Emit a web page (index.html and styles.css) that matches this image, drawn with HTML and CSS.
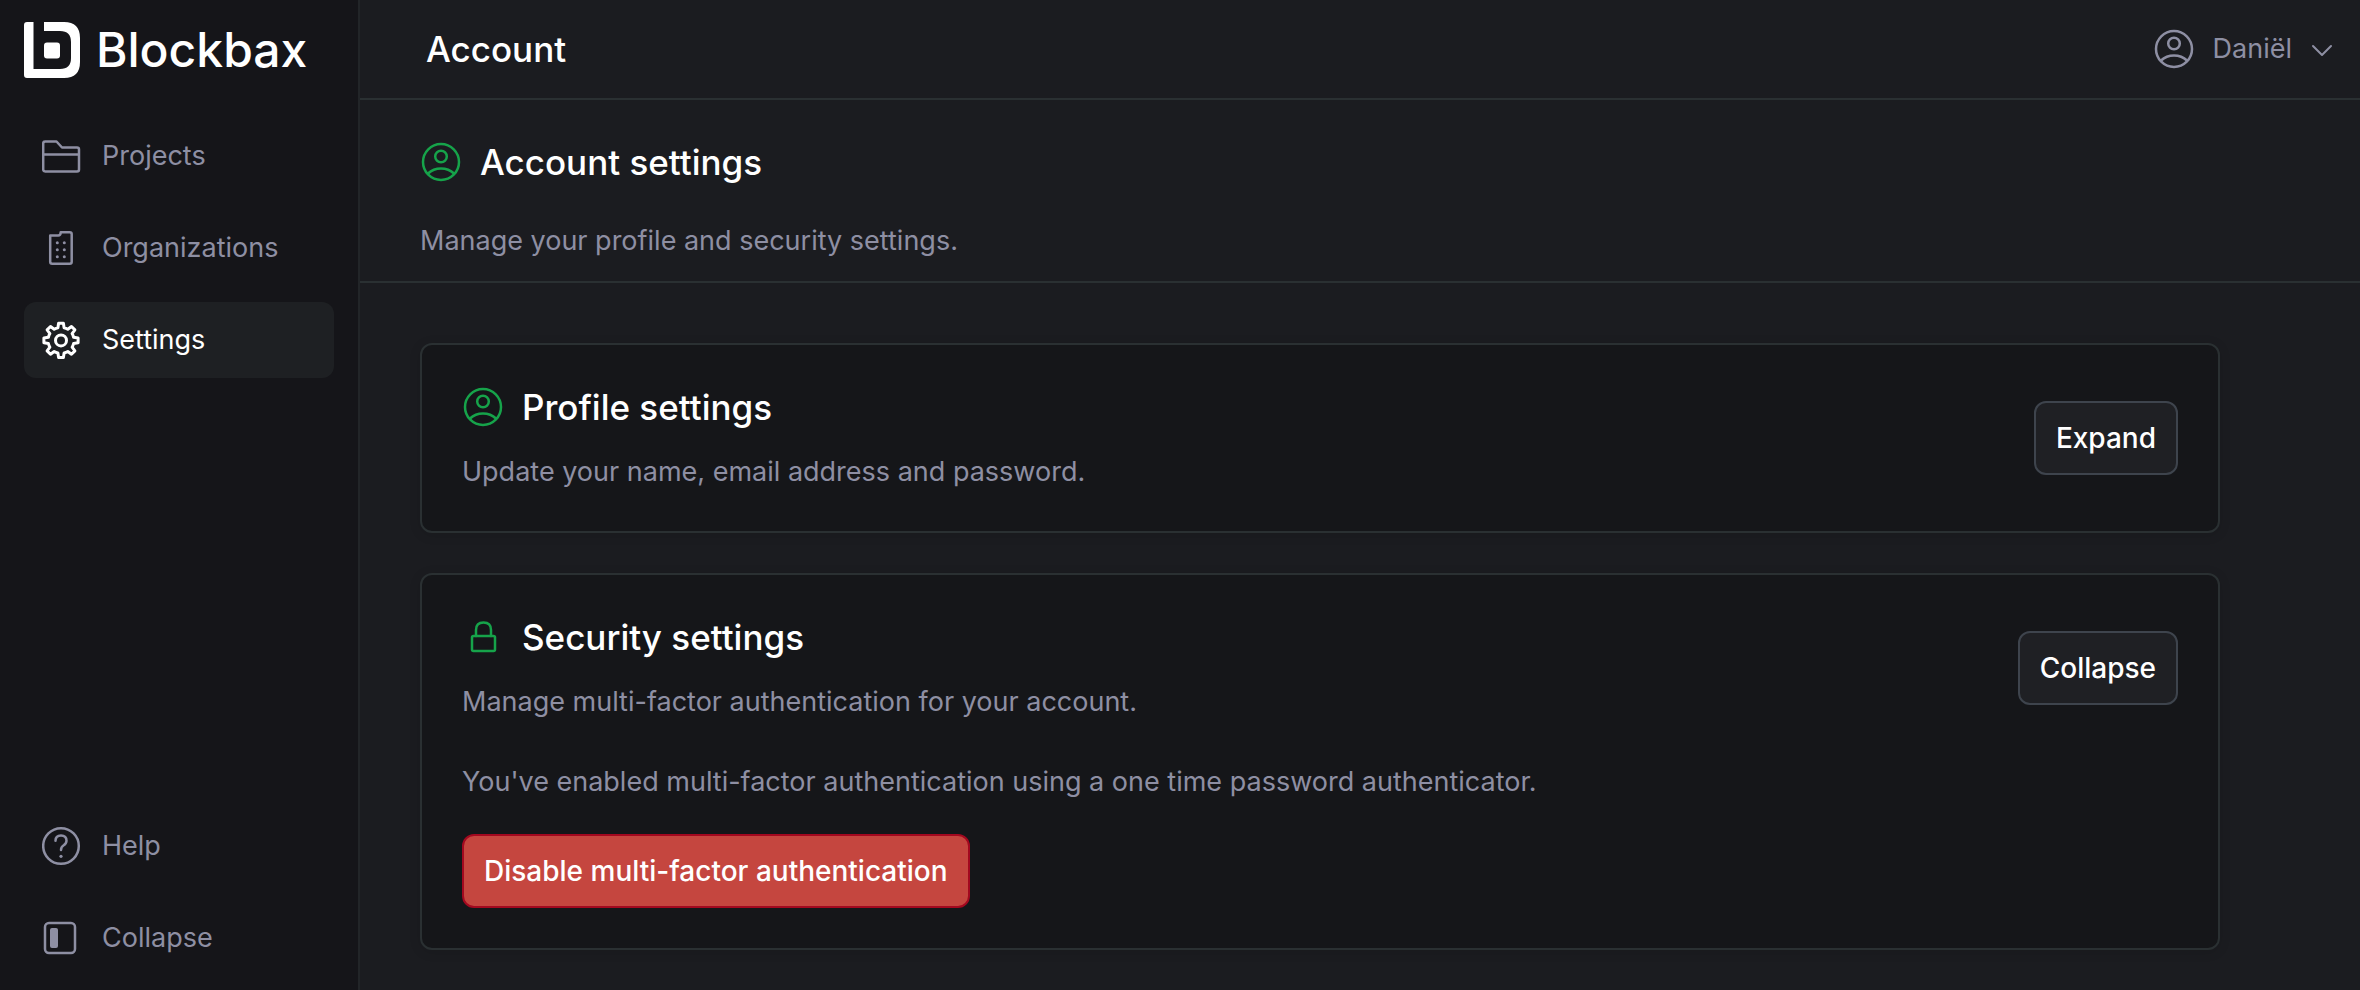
FILE: index.html
```html
<!DOCTYPE html>
<html lang="en">
  <head>
    <meta charset="UTF-8" />
    <meta name="viewport" content="width=device-width, initial-scale=1.0" />
    <title>Account - Blockbax</title>
    <link rel="stylesheet" href="styles.css">
  </head>
  <body>
    <!-- Shared icon shapes -->
    <svg class="icon-defs" aria-hidden="true">
      <symbol id="icon-user" viewBox="0 0 42 42">
        <circle cx="21" cy="21" r="18" />
        <circle cx="21" cy="15.5" r="5.8" />
        <path d="M8 32.5C15 25.7 27 25.7 34 32.5" />
      </symbol>
    </svg>

    <div class="app">
      <aside class="sidebar">
        <a class="logo" href="#">
          <svg class="logo-mark" viewBox="0 0 56 56" aria-hidden="true">
            <path d="M3 0h6.5v47H36q11 0 11-11V20q0-11-11-11H20V0h20q16 0 16 16v24q0 16-16 16H3q-3 0-3-3V3q0-3 3-3z" />
            <rect x="20" y="20.5" width="16" height="16" rx="3" />
          </svg>
          <span class="logo-text">Blockbax</span>
        </a>

        <nav class="nav">
          <a class="nav-item" href="#">
            <svg class="icon" viewBox="0 0 42 42" aria-hidden="true">
              <path d="M1.200 19.500V8.500q0-2 2-2h11.300l5.500 6h15q2 0 2 2v20q0 2-2 2h-31.800q-2 0-2-2v-15h35.600" />
            </svg>
            Projects
          </a>
          <a class="nav-item" href="#">
            <svg class="icon" viewBox="0 0 42 42" aria-hidden="true">
              <path d="M8.200 8.500h8q2.500 0 2.500-3.200h9q2 0 2 2v27.500q0 2-2 2h-17.500q-2 0-2-2z" />
              <g class="dots">
                <circle cx="15.300" cy="15.700" r="1.500" />
                <circle cx="22.300" cy="15.700" r="1.500" />
                <circle cx="15.300" cy="22.700" r="1.500" />
                <circle cx="22.300" cy="22.700" r="1.500" />
                <circle cx="15.300" cy="29.700" r="1.500" />
                <circle cx="22.300" cy="29.700" r="1.500" />
              </g>
            </svg>
            Organizations
          </a>
          <a class="nav-item active" href="#">
            <svg class="icon icon-bold" viewBox="0 -1 42 42" aria-hidden="true">
              <path d="M16.600 3.300h4.800l.7 4.500q2 .5 3.700 1.500l3.700-2.800 3.400 3.400-2.800 3.700q1 1.700 1.500 3.700l4.500.7v4.800l-4.500.7q-.5 2-1.500 3.700l2.800 3.700-3.400 3.400-3.700-2.800q-1.700 1-3.700 1.500l-.7 4.500h-4.800l-.7-4.500q-2-.5-3.700-1.500l-3.700 2.800-3.400-3.400 2.800-3.700q-1-1.700-1.500-3.700l-4.500-.7v-4.800l4.500-.7q.5-2 1.500-3.700l-2.800-3.700 3.400-3.400 3.700 2.800q1.700-1 3.700-1.500z" />
              <circle cx="19" cy="20.400" r="5.500" />
            </svg>
            Settings
          </a>
        </nav>

        <div class="nav nav-bottom">
          <a class="nav-item" href="#">
            <svg class="icon" viewBox="0 0 42 42" aria-hidden="true">
              <circle cx="19" cy="21" r="17.800" />
              <path d="M13.500 15.800q0-5.300 5.500-5.300t5.500 5.300q0 2.700-2.800 4.500-2.700 1.700-2.700 4.700" />
              <circle class="dot" cx="19" cy="31.300" r="1.600" />
            </svg>
            Help
          </a>
          <button class="nav-item" type="button">
            <svg class="icon" viewBox="0 0 42 42" aria-hidden="true">
              <rect x="3" y="6" width="30" height="30" rx="4" />
              <rect class="dot" x="8" y="11" width="8" height="20" rx="2" />
            </svg>
            Collapse
          </button>
        </div>
      </aside>

      <main class="main">
        <header class="topbar">
          <h1 class="title">Account</h1>
          <button class="user-menu" type="button">
            <svg class="icon" aria-hidden="true"><use href="#icon-user" /></svg>
            Daniël
            <svg class="chevron" viewBox="0 0 24 24" aria-hidden="true">
              <path d="M3 9l9 9 9-9" />
            </svg>
          </button>
        </header>

        <section class="page-head">
          <h2 class="title">
            <svg class="icon icon-green" aria-hidden="true"><use href="#icon-user" /></svg>
            Account settings
          </h2>
          <p class="text">Manage your profile and security settings.</p>
        </section>

        <div class="cards">
          <section class="card">
            <div class="card-head">
              <div class="card-intro">
                <h2 class="title">
                  <svg class="icon icon-green" aria-hidden="true"><use href="#icon-user" /></svg>
                  Profile settings
                </h2>
                <p class="text">Update your name, email address and password.</p>
              </div>
              <button class="btn" type="button">Expand</button>
            </div>
          </section>

          <section class="card">
            <div class="card-head">
              <div class="card-intro">
                <h2 class="title">
                  <svg class="icon icon-green" viewBox="0 0 42 42" aria-hidden="true">
                    <rect x="10" y="20" width="23" height="15" rx="1.500" />
                    <path d="M14 20v-6q0-7.500 7.500-7.500t7.500 7.500v6" />
                  </svg>
                  Security settings
                </h2>
                <p class="text">Manage multi-factor authentication for your account.</p>
              </div>
              <button class="btn" type="button">Collapse</button>
            </div>
            <div class="card-body">
              <p class="text">You've enabled multi-factor authentication using a one time password authenticator.</p>
              <button class="btn btn-danger" type="button">Disable multi-factor authentication</button>
            </div>
          </section>
        </div>
      </main>
    </div>
  </body>
</html>
```

FILE: styles.css
```css
* {
  box-sizing: border-box;
}

body {
  margin: 0;
  background: #1b1c20;
  color: #fff;
  font-family: Inter, "Liberation Sans", sans-serif;
  font-size: 27px;
  line-height: 38px;
}

h1,
h2,
p {
  margin: 0;
}

button {
  font: inherit;
  cursor: pointer;
}

a {
  color: inherit;
  text-decoration: none;
}

.app {
  display: flex;
  min-height: 100vh;
}

/* Icons */
.icon-defs {
  position: absolute;
  width: 0;
  height: 0;
}

.icon,
.chevron {
  flex: none;
  width: 42px;
  height: 42px;
  fill: none;
  stroke: currentColor;
  stroke-width: 2.5;
  stroke-linejoin: round;
  stroke-linecap: round;
}

.icon-bold {
  stroke-width: 3;
}

.icon-green {
  color: #16a34a;
}

.dots,
.dot {
  fill: currentColor;
  stroke: none;
}

.chevron {
  width: 24px;
  height: 24px;
  stroke-width: 2;
}

/* Sidebar */
.sidebar {
  display: flex;
  flex-direction: column;
  flex: none;
  width: 360px;
  padding: 22px 24px 14px;
  background: #151519;
  border-right: 2px solid #222528;
}

.logo {
  display: flex;
  align-items: center;
  gap: 16px;
  height: 56px;
}

.logo-mark {
  width: 56px;
  height: 56px;
  fill: #fff;
}

.logo-text {
  font-size: 48px;
  font-weight: 500;
  line-height: 56px;
}

.nav {
  display: flex;
  flex-direction: column;
  gap: 16px;
  margin-top: 40px;
}

.nav-bottom {
  margin-top: auto;
}

.nav-item {
  display: flex;
  align-items: center;
  gap: 18px;
  height: 76px;
  padding: 0 18px;
  border: 0;
  border-radius: 12px;
  background: none;
  color: #8e8fa3;
}

.nav-item.active {
  background: #1e2023;
  color: #fff;
}

/* Main column */
.main {
  flex: 1;
  min-width: 0;
}

.topbar {
  display: flex;
  align-items: center;
  justify-content: space-between;
  height: 100px;
  padding: 0 26px 0 66px;
  border-bottom: 2px solid #2a3032;
}

.title {
  display: flex;
  align-items: center;
  gap: 18px;
  font-size: 35px;
  font-weight: 500;
  line-height: 44px;
}

.text {
  color: #8e8fa3;
}

.user-menu {
  display: flex;
  align-items: center;
  gap: 18px;
  padding: 0;
  border: 0;
  background: none;
  color: #8e8fa3;
}

.page-head {
  display: flex;
  flex-direction: column;
  gap: 38px;
  padding: 40px 60px 21px;
  border-bottom: 2px solid #2a3032;
}

.cards {
  display: flex;
  flex-direction: column;
  gap: 40px;
  max-width: 1920px;
  padding: 60px 60px 40px;
}

.card {
  padding: 40px;
  border: 2px solid #2a3032;
  border-radius: 12px;
  background: #151619;
  box-shadow: 0 2px 12px rgba(0, 0, 0, 0.12);
}

.card-head {
  display: flex;
  align-items: center;
  justify-content: space-between;
}

.card-intro {
  display: flex;
  flex-direction: column;
  gap: 24px;
}

.card-body {
  display: flex;
  flex-direction: column;
  align-items: flex-start;
  gap: 33px;
  margin-top: 42px;
}

.btn {
  height: 74px;
  padding: 0 20px;
  border: 2px solid #3e444d;
  border-radius: 12px;
  background: #1f2024;
  color: #fff;
  font-size: 28px;
  font-weight: 500;
}

.btn-danger {
  border-color: #a3081f;
  background: #c5463f;
}
```
